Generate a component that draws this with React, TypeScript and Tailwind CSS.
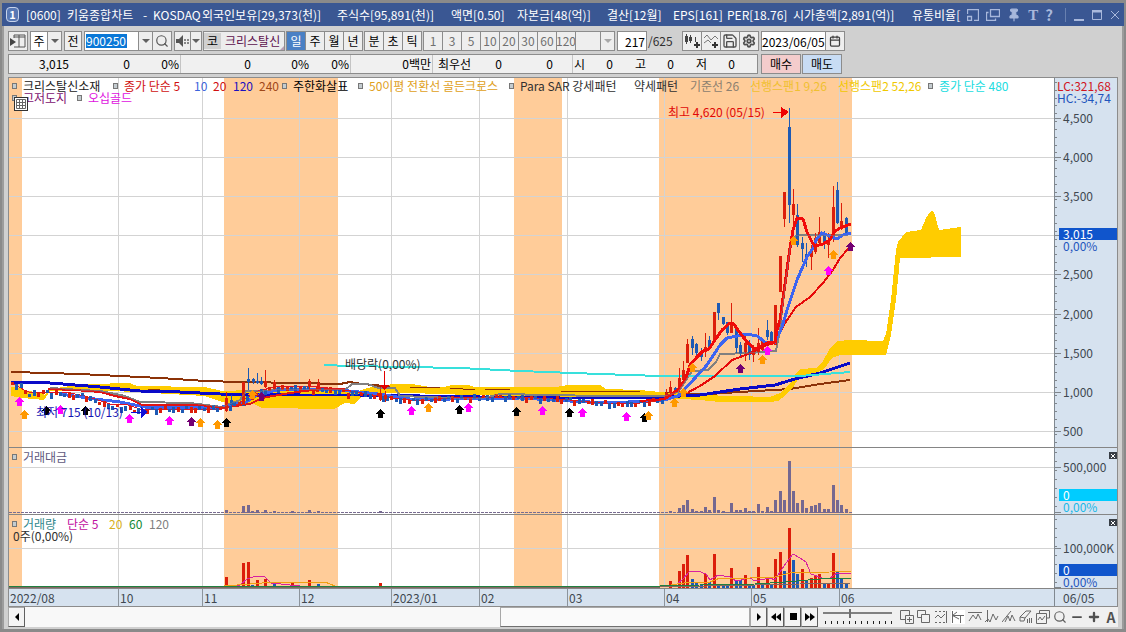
import type { ReactNode } from "react";
import { Search, Save, Settings, Calendar, Pin, Minus, Plus } from "lucide-react";

const LEFT = 9;
const WIDTH = 1045;

const BANDS = [[9, 22], [224, 338], [514, 562], [659, 852]];
const MONTHS: [number, string][] = [[9, "2022/08"], [118, "10"], [202, "11"], [299, "12"], [391, "2023/01"], [479, "02"], [567, "03"], [664, "04"], [751, "05"], [839, "06"]];

const RED = "#dc1e0a";
const BLUE = "#1e5ab4";

// x, high, low, body top, body bottom, rising
const CANDLES: [number, number, number, number, number, number][] = [
  [226, 392, 412, 398, 411, 1], [231, 395, 406, 400, 405, 0], [243, 382, 405, 382, 405, 1], [248, 368, 390, 379, 382, 0], [253, 378, 384, 379, 382, 0],
  [257, 373, 384, 381, 383, 0], [261, 377, 385, 381, 384, 0], [265, 370, 388, 381, 387, 1], [274, 380, 390, 382, 389, 1], [309, 379, 389, 381, 387, 1],
  [318, 379, 389, 383, 388, 1], [380, 387, 401, 393, 400, 1], [385, 391, 402, 395, 399, 1],
  [666, 389, 398, 393, 397, 1], [670, 381, 396, 387, 393, 1], [675, 387, 392, 388, 390, 0], [679, 368, 394, 378, 389, 1], [683, 361, 380, 370, 380, 1],
  [687, 339, 363, 344, 363, 1], [692, 336, 355, 339, 348, 0], [696, 343, 360, 344, 353, 0], [701, 348, 361, 351, 357, 0],
  [705, 333, 357, 347, 352, 1], [709, 336, 349, 340, 347, 0], [714, 312, 341, 312, 341, 1], [718, 303, 320, 303, 313, 0],
  [723, 317, 325, 317, 324, 0], [727, 322, 335, 322, 333, 0], [731, 303, 333, 322, 333, 1], [736, 327, 353, 328, 348, 0],
  [740, 342, 356, 345, 354, 0], [745, 333, 361, 343, 352, 1], [749, 340, 360, 343, 355, 0], [753, 345, 362, 348, 355, 1],
  [758, 328, 355, 343, 352, 1], [762, 338, 351, 340, 350, 1], [767, 320, 340, 330, 337, 0], [771, 331, 345, 332, 344, 0],
  [775, 305, 345, 305, 345, 1], [780, 256, 292, 256, 292, 1], [784, 192, 227, 192, 219, 1], [789, 108, 223, 127, 205, 0],
  [793, 189, 237, 204, 215, 1], [797, 204, 247, 215, 245, 0], [802, 237, 262, 243, 249, 0], [806, 243, 267, 254, 259, 0],
  [811, 245, 270, 250, 257, 1], [815, 233, 254, 238, 252, 1], [819, 217, 245, 232, 243, 1], [824, 231, 249, 233, 243, 0],
  [828, 233, 258, 240, 245, 1], [833, 186, 242, 207, 237, 1], [837, 182, 224, 190, 223, 0], [841, 203, 230, 221, 226, 1], [846, 217, 235, 218, 234, 0],
];

const EARLY_PATH = [[11, 383], [20, 385], [28, 395], [34, 392], [48, 392], [85, 396], [98, 402], [110, 406], [125, 407], [140, 411], [150, 409], [205, 408], [224, 407], [238, 403], [246, 398], [260, 391], [275, 387], [300, 387], [330, 390], [345, 392], [360, 393], [380, 396], [395, 399], [410, 400], [440, 398], [500, 396], [560, 399], [600, 402], [615, 404], [640, 402], [664, 399]];

function pathY(x: number) {
  for (let i = 1; i < EARLY_PATH.length; i++) {
    const [x0, y0] = EARLY_PATH[i - 1];
    const [x1, y1] = EARLY_PATH[i];
    if (x <= x1) return y0 + ((y1 - y0) * (x - x0)) / (x1 - x0);
  }
  return 399;
}

const EARLY = Array.from({ length: 150 }, (_, i) => {
  const x = Math.round(11 + i * 4.36);
  const wiggle = Math.sin(i * 2.3) * 1.5;
  return { x, y: Math.round(pathY(x) + wiggle), h: 3 + ((i * 7) % 4), up: (i * 5) % 7 < 3 };
}).filter((c) => c.x < 664);

type Mark = [number, number, string];
const M = "#ff00ff", O = "#ff9900", K = "#000000", P = "#730073";
const MARKS: Mark[] = [
  [19, 402, M], [24, 415, O], [46, 411, K], [60, 410, M], [85, 411, K], [129, 419, M], [169, 421, M], [191, 422, P], [200, 423, O], [217, 425, O],
  [226, 423, K], [252, 395, O], [261, 397, P], [380, 414, K], [411, 411, M], [428, 408, O], [459, 410, K], [468, 408, M], [516, 412, K], [542, 411, M],
  [569, 413, K], [582, 413, M], [626, 417, M], [644, 418, K], [648, 416, O], [674, 403, O], [683, 393, O], [692, 368, O], [740, 369, P], [762, 360, O],
  [767, 351, M], [793, 241, O], [828, 271, M], [833, 255, O], [850, 247, P],
];

// x, turnover bar top, volume bar top, rising
const BARS: [number, number, number, number][] = [
  [226, 510, 577, 1], [243, 506, 563, 1], [248, 505, 562, 1], [252, 511, 585, 0], [257, 510, 580, 1], [265, 510, 579, 1], [274, 511, 584, 0], [292, 511, 583, 1], [309, 510, 580, 1], [318, 511, 584, 0], [380, 511, 583, 1],
  [670, 511, 581, 1], [679, 508, 571, 1], [683, 505, 564, 1], [687, 500, 555, 1], [692, 509, 579, 0], [696, 511, 583, 0], [701, 511, 584, 0], [705, 507, 574, 1], [709, 510, 582, 0],
  [714, 497, 554, 1], [718, 510, 584, 0], [723, 511, 585, 0], [727, 512, 585, 0], [731, 503, 568, 1], [736, 510, 581, 0], [740, 510, 580, 0], [745, 508, 575, 1], [749, 511, 584, 0], [753, 511, 585, 0],
  [758, 504, 567, 1], [762, 511, 583, 0], [767, 507, 577, 1], [771, 511, 585, 0], [775, 500, 559, 1], [780, 491, 552, 1], [784, 500, 571, 0], [789, 461, 528, 1], [793, 491, 560, 0], [797, 503, 574, 0],
  [802, 500, 569, 1], [806, 508, 580, 0], [811, 506, 578, 1], [815, 505, 575, 1], [819, 503, 574, 1], [824, 509, 583, 0], [828, 509, 584, 1], [833, 485, 553, 1], [837, 500, 572, 0], [841, 505, 579, 0], [846, 509, 583, 0],
];

const CLOUD = "11,387 22,388 24,391 40,392 45,395 48,390 62,387 90,384 130,383 137,386 205,387 222,391 250,390 340,389 358,391 375,386 395,384 412,384 430,387 444,387 452,385 468,385 475,387 556,387 568,385 600,385 606,389 640,390 670,393 700,395 770,397 780,393 790,384 796,373 800,369 816,368 822,363 830,348 838,341 850,340 883,341 886,334 891,300 896,250 898,242 906,232 921,230 926,218 931,211 934,212 939,230 961,227 961,257 900,258 896,300 891,335 886,355 840,355 832,358 824,369 815,374 800,376 794,386 786,395 778,401 770,402 720,402 700,400 665,398 605,397 560,397 470,395 410,393 375,393 364,395 354,404 345,403 334,409 262,408 252,403 240,405 222,402 205,396 135,392 90,390 50,391 44,400 22,398 11,396";

const L = {
  brown: "11,372 48,373 80,374 120,376 160,378 205,381 240,382 300,383 340,384 350,382 362,384 385,386 440,389 470,388 510,388 560,391 640,392 665,393 710,394 740,392 790,389 820,384 850,380",
  navy: "11,382 50,383 100,387 140,391 180,392 220,394 300,395 360,395 420,396 480,397 560,398 620,398 660,397 700,395 740,389 775,385 795,379 820,373 850,363",
  cyan: "324,365 350,366 460,368 520,371 600,374 660,376 740,376 800,376 825,374 850,372",
  grey: "50,388 80,390 100,391 125,396 140,402 190,403 222,407 240,400 246,391 262,391 285,389 345,390 352,384 368,384 378,388 395,388 400,396 480,399 500,394 600,396 665,396 678,392 692,371 708,370 716,362 720,354 750,353 776,351 779,335 790,248 793,238 798,235 848,235",
  red5: "664,399 678,390 686,378 690,365 697,357 703,351 709,349 715,340 722,330 730,323 733,323 740,333 748,343 755,349 767,343 775,342 777,330 780,320 790,248 793,230 797,218 803,219 807,232 812,242 815,246 823,244 830,240 834,232 840,228 851,224",
  blue10: "664,400 678,396 684,390 695,378 707,365 720,345 727,338 737,336 747,334 757,336 765,342 775,342 782,327 788,307 797,280 807,257 813,248 816,240 822,233 827,235 837,239 843,235 851,233",
  red20: "640,401 665,399 687,393 700,386 715,376 732,360 743,356 755,351 767,345 775,343 785,323 796,307 810,297 823,283 833,270 840,258 849,248",
  early5: "11,382 24,390 32,393 52,392 70,393 85,396 98,400 110,404 125,404 140,409 222,409 238,404 246,398 258,391 275,387 310,386 345,390 378,396 400,399 420,401 450,398 520,397 570,400 610,404 640,403 664,400",
  early20: "48,389 75,390 100,392 115,396 130,399 142,405 200,405 222,408 250,404 262,398 290,393 320,389 345,389",
  early10: "60,394 95,399 120,402 150,408 222,407 246,402 256,396 280,389 330,389 378,394 410,399 450,399 520,398 570,401 610,403 664,400",
};

const GRIDLINE = "#d3d3d3";

function Backdrop({ top, height, lines }: { top: number; height: number; lines: number[] }) {
  return (
    <g>
      {BANDS.map(([a, b]) => <rect key={a} x={a} y={top} width={b - a} height={height} fill="#ffcc99" />)}
      {MONTHS.slice(1).map(([x]) => <rect key={x} x={x} y={top} width="1" height={height} fill={GRIDLINE} />)}
      {lines.map((y) => <rect key={y} x={LEFT} y={y} width={WIDTH} height="1" fill={GRIDLINE} />)}
    </g>
  );
}

function Line({ points, color, width = 2 }: { points: string; color: string; width?: number }) {
  return <polyline points={points} fill="none" stroke={color} strokeWidth={width} />;
}

type Label = { y: number; text: string; kind?: "navy" | "cyan" | "blueText" | "cyanText" | "redText" | "blueEdge" };

const LABEL_STYLE = {
  navy: "left-1 right-0 bg-[#1055cc] pl-1 text-white",
  cyan: "left-1 right-0 bg-[#00ccff] pl-1 text-white",
  blueText: "left-2 text-[#1f55bd]",
  blueEdge: "left-0.5 text-[#1f55bd]",
  cyanText: "left-2 text-[#18b8e8]",
  redText: "left-0.5 text-[#d0141e]",
  plain: "left-2 text-[#404850]",
};

function Pane({ top, height, className, ticks, labels, closable, children, overlay }: {
  top: number; height: number; className: string; ticks: number[]; labels: Label[]; closable?: boolean; children: ReactNode; overlay: ReactNode;
}) {
  const minor: number[] = [];
  const step = top === 78 ? 7.83 : 9;
  for (let y = top + 4; y < top + height; y += step) minor.push(Math.round(y));
  return (
    <section className={`flex border-b border-[#858585] ${className}`}>
      <div className="relative min-w-0 flex-1 overflow-hidden bg-white">
        <svg className="absolute inset-0 h-full w-full" viewBox={`${LEFT} ${top} ${WIDTH} ${height}`} preserveAspectRatio="none" shapeRendering="crispEdges">
          {children}
        </svg>
        {overlay}
      </div>
      <div className="relative w-[63px] shrink-0 border-l border-[#808890] bg-[#d6e2ef]">
        <svg className="absolute inset-y-0 left-0 h-full w-2" viewBox={`0 ${top} 8 ${height}`} preserveAspectRatio="none" shapeRendering="crispEdges">
          {minor.map((y) => <rect key={y} x="0" y={y} width="2" height="1" fill="#80868c" />)}
          {ticks.map((y) => <rect key={y} x="0" y={y} width="6" height="1" fill="#80868c" />)}
        </svg>
        {labels.map((l) => (
          <span key={l.text + l.y} className={`absolute -translate-y-1/2 text-[12px] leading-[12px] whitespace-nowrap ${LABEL_STYLE[l.kind ?? "plain"]}`} style={{ top: `${((l.y - top) / height) * 100}%` }}>
            {l.text}
          </span>
        ))}
        {closable && (
          <button aria-label="닫기" className="absolute top-1 right-0 flex h-[7px] w-2 items-center justify-center bg-[#383e46]">
            <svg className="h-1 w-1" viewBox="0 0 4 4"><path d="M0 0L4 4M4 0L0 4" stroke="#fff" /></svg>
          </button>
        )}
      </div>
    </section>
  );
}

function Bullet() {
  return <i className="mr-1.5 inline-block h-1.5 w-[5px] shrink-0 border border-[#777] bg-[#c4ccd0]" />;
}

const LEGEND: [string, string, boolean?][] = [
  ["w-[101px] text-[#202020]", "크리스탈신소재", true],
  ["w-[81px] text-[#d01010]", "종가 단순 5", true],
  ["w-[19px] text-[#3c64dc]", "10"],
  ["w-5 text-[#d01010]", "20"],
  ["w-[26px] text-[#1a10c0]", "120"],
  ["w-[23px] text-[#a04818]", "240"],
  ["w-[76px] text-black", "주한화살표", true],
  ["w-[151px] text-[#e0a020]", "50이평 전환선 골든크로스", true],
  ["w-[125px] text-[#303030]", "Para SAR 강세패턴", true],
  ["w-14 text-[#303030]", "약세패턴"],
  ["w-[60px] text-[#8c8070]", "기준선 26"],
  ["w-[88px] text-[#f0c030]", "선행스팬1 9,26"],
  ["w-[90px] text-[#f0c800]", "선행스팬2 52,26"],
  ["w-[100px] text-[#20dce0]", "종가 단순 480", true],
];

function Note({ x, y, className, children }: { x: number; y: number; className: string; children: ReactNode }) {
  return (
    <span className={`absolute -translate-y-1/2 whitespace-nowrap text-[12px] leading-[12px] ${className}`} style={{ left: `${((x - LEFT) / WIDTH) * 100}%`, top: `${((y - 78) / 369) * 100}%` }}>
      {children}
    </span>
  );
}

const FRAME = "flex h-5 shrink-0 items-center justify-center border border-[#8c8c8c] -ml-px";
const BTN = `${FRAME} bg-[#eeeeee]`;

function Caret({ dim }: { dim?: boolean }) {
  return <svg className="h-1 w-2" viewBox="0 0 8 4"><path d="M0 0H8L4 4Z" fill={dim ? "#a8a8a8" : "#606060"} /></svg>;
}

function Toolbar() {
  return (
    <div className="flex h-5 items-center overflow-hidden pl-px text-[12px] text-black">
      <button aria-label="창 연결" className={`${BTN} w-5`}>
        <svg className="h-3.5 w-4" viewBox="0 0 16 14" fill="none"><path d="M4 1H15V13H4M4 1V4M9 1V13M4 3H15" stroke="#555" /><path d="M0 4L6 8L0 12Z" fill="#444" /></svg>
      </button>
      <button className={`${FRAME} ml-0.5 w-[18px] bg-white`}>주</button>
      <button aria-label="주 선택" className={`${BTN} w-[15px]`}><Caret /></button>
      <button className={`${BTN} ml-0.5 w-[18px]`}>전</button>
      <label className="ml-0.5 flex h-5 w-[55px] shrink-0 items-center border border-[#8c8c8c] bg-white pl-px">
        <input aria-label="종목코드" readOnly defaultValue="900250" className="h-3.5 w-[41px] bg-[#0a78d7] text-white outline-none" />
      </label>
      <button aria-label="종목 목록" className={`${BTN} w-[15px]`}><Caret /></button>
      <button aria-label="종목 검색" className={`${BTN} w-5`}><Search className="h-3.5 w-3.5 text-[#555]" /></button>
      <button aria-label="소리" className={`${BTN} ml-0.5 w-[17px]`}>
        <svg className="h-3 w-3.5" viewBox="0 0 14 12"><path d="M0 4H3L7 0V12L3 8H0Z" fill="#555" /><path d="M9 4V6M9 7V9M12 4V6M12 7V9" stroke="#666" strokeWidth="1.5" /></svg>
      </button>
      <button aria-label="소리 선택" className={`${BTN} w-3`}><Caret /></button>
      <div className="ml-px flex h-5 w-[82px] shrink-0 items-center overflow-hidden border border-[#8c8c8c] bg-[#ededed]">
        <span className="flex h-4 w-[17px] shrink-0 items-center justify-center bg-[#d0d0d0]">코</span>
        <span className="ml-1 whitespace-nowrap text-[#5c104c]">크리스탈신</span>
        <svg className="mt-auto ml-auto h-1.5 w-1.5 shrink-0" viewBox="0 0 6 6"><path d="M6 0V6H0Z" fill="#b8a0b4" /></svg>
      </div>
      <div className="ml-0.5 flex">
        {["일", "주", "월", "년"].map((t) => (
          <button key={t} className={t === "일" ? `${FRAME} w-5 bg-[#4a80c4] text-white` : `${BTN} w-5`}>{t}</button>
        ))}
      </div>
      <div className="ml-0.5 flex">
        {["분", "초", "틱"].map((t) => <button key={t} className={`${BTN} w-5`}>{t}</button>)}
      </div>
      <div className="ml-0.5 flex text-[#707070]">
        {["1", "3", "5", "10", "20", "30", "60", "120"].map((t) => <button key={t} className={`${BTN} w-5`}>{t}</button>)}
      </div>
      <button aria-label="분 주기" className={`${BTN} w-[26px]`} />
      <button aria-label="주기 선택" className={`${BTN} w-[15px]`}><Caret dim /></button>
      <input aria-label="봉 개수" readOnly defaultValue="217" className="ml-0.5 h-5 w-[30px] shrink-0 border border-[#8c8c8c] bg-white pr-px text-right outline-none" />
      <span className="w-[35px] shrink-0 pl-px text-[#303030]">/625</span>
      <button aria-label="봉 추가" className={`${BTN} ml-0 w-5`}>
        <svg className="h-3.5 w-4" viewBox="0 0 16 14"><path d="M2.500 0V10M6.500 1V9M11.500 3V8" stroke="#444" /><path d="M1 2H4V8H1ZM5 3H8V7H5Z" fill="#444" /><path d="M13 8V14M10 11H16" stroke="#333" strokeWidth="2" /></svg>
      </button>
      <button aria-label="지표 추가" className={`${BTN} w-5`}>
        <svg className="h-3.5 w-4" viewBox="0 0 16 14" fill="none"><path d="M1 4L4 1L8 6L12 2L15 5M1 9L5 6L8 9" stroke="#777" /><path d="M12 8V14M9 11H15" stroke="#333" strokeWidth="2" /></svg>
      </button>
      <button aria-label="저장" className={`${BTN} w-5`}><Save className="h-4 w-4 text-[#505050]" strokeWidth={2} /></button>
      <button aria-label="설정" className={`${BTN} w-5`}><Settings className="h-3.5 w-3.5 text-[#505050]" strokeWidth={3} /></button>
      <input aria-label="날짜" readOnly defaultValue="2023/06/05" className="ml-0.5 h-5 w-[65px] shrink-0 border border-[#8c8c8c] bg-white outline-none" />
      <button aria-label="달력" className={`${BTN} w-5`}><Calendar className="h-3 w-3 text-[#404040]" strokeWidth={2.5} /></button>
    </div>
  );
}

const QUOTES: [string, string][] = [
  ["w-[61px]", "3,015"], ["w-[61px]", "0"], ["w-[50px] border-r border-[#c4c4c4]", "0%"],
  ["w-[71px]", "0"], ["w-[58px]", "0%"], ["w-[41px] border-r border-[#c4c4c4]", "0%"],
  ["w-[82px] border-r border-[#c4c4c4]", "0백만"], ["w-[39px]", "최우선"], ["w-[31px]", "0"], ["w-[51px]", "0"],
  ["ml-[18px] w-3.5 border-l border-[#c4c4c4]", "시"], ["w-7", "0"], ["w-[33px]", "고"], ["w-7", "0"], ["w-[33px]", "저"], ["w-7", "0"],
];

function QuoteRow() {
  return (
    <div className="flex h-5 items-stretch gap-[3px] text-[12px] text-black">
      <div className="flex w-[750px] shrink-0 items-center overflow-hidden border border-[#8c8c8c] bg-[#f0f0f0]">
        {QUOTES.map(([w, t], i) => <span key={i} className={`shrink-0 pr-px text-right whitespace-nowrap ${w}`}>{t}</span>)}
      </div>
      <button className="w-10 border border-[#8c8c8c] bg-[#f4cccc]">매수</button>
      <button className="-ml-0.5 w-10 border border-[#8c8c8c] bg-[#c8dcf4]">매도</button>
    </div>
  );
}

const TITLE: [string, string][] = [
  ["w-[41px]", "[0600]"], ["w-[76px]", "키움종합차트"], ["w-2.5", "-"], ["w-[49px]", "KOSDAQ"], ["w-[135px]", "외국인보유[29,373(천)]"],
  ["w-[114px]", "주식수[95,891(천)]"], ["w-[66px]", "액면[0.50]"], ["w-[90px]", "자본금[48(억)]"], ["w-[66px]", "결산[12월]"], ["w-[54px]", "EPS[161]"],
  ["w-[66px]", "PER[18.76]"], ["w-[119px]", "시가총액[2,891(억)]"], ["w-[50px]", "유통비율["],
];

function TitleBar() {
  return (
    <header className="flex h-[23px] items-center bg-[#3a5793] pr-1 pl-1 text-[12px] text-white">
      <span className="mr-[7px] flex h-[15px] w-[13px] shrink-0 items-center justify-center rounded-sm border border-[#c8d4ec] bg-[#5878b4] text-[11px] font-bold">1</span>
      <h1 className="flex min-w-0 overflow-hidden font-normal">
        {TITLE.map(([w, t]) => <span key={t} className={`shrink-0 whitespace-nowrap ${w}`}>{t}</span>)}
      </h1>
      <div className="ml-auto flex shrink-0 items-center gap-2 text-[#a8b8dc]">
        <div className="flex items-center gap-[7px]">
          <button aria-label="크기 조절"><svg className="block h-3 w-3" viewBox="0 0 12 12" fill="none" stroke="currentColor"><path d="M.5 5V.5H11.500V11.500H7M.5 7.500H4.500V11.500H.5Z" strokeWidth="1.300" /></svg></button>
          <button aria-label="창 복제"><svg className="block h-3 w-3.5" viewBox="0 0 14 12" fill="none" stroke="currentColor"><path d="M4.500 .5H13.500V7.500H4.500ZM2.500 3.500H.5V11.500H9.500V9.500" strokeWidth="1.300" /></svg></button>
          <button aria-label="고정"><Pin className="block h-3.5 w-3.5" fill="currentColor" /></button>
          <button aria-label="글꼴" className="font-['Liberation_Serif',serif] text-[15px] leading-4 font-bold">T</button>
          <button aria-label="도움말" className="text-[15px] leading-4 font-bold">?</button>
        </div>
        <i className="ml-1 h-3.5 w-px bg-[#6880b0]" />
        <button aria-label="최소화"><svg className="block h-3 w-2.5" viewBox="0 0 10 12"><path d="M0 10H10V12H0Z" fill="currentColor" /></svg></button>
        <button aria-label="최대화"><svg className="block h-2.5 w-2.5" viewBox="0 0 10 10" fill="none" stroke="currentColor"><path d="M.5 2H9.500V9.500H.5Z" /><path d="M0 1H10" strokeWidth="2" /></svg></button>
        <button aria-label="닫기"><svg className="block h-2.5 w-2.5" viewBox="0 0 10 10" stroke="currentColor"><path d="M1 1L9 9M9 1L1 9" /></svg></button>
      </div>
    </header>
  );
}

const TOOL_PATHS: [string, string][] = [
  ["새 창", "M5 9.500H.5V.5H9.500V5M5.500 5.500H13.500V13.500H5.500ZM9.500 7V12M7 9.500H12"],
  ["겹치기", "M4 7.500H.5V.5H8.500V4M4.500 4.500H12.500V12.500H4.500Z"],
  ["기간", "M1 1.500H3M5 1.500H7M9 1.500H11M1 12.500H3M5 12.500H7M9 12.500H11M12.500 1V13M1 8L4 5L7 8L11 4"],
  ["십자선", "M1.500 1V13M1.500 5.500H13M6 2L1.500 5.500L8 9M9.500 5V13"],
  ["추세", "M0 2.500H14M1 11L5 5L8 9L10 4L13 10"],
  ["파동", "M2.500 0V12M0 12L3 9L5 12L8 4L11 10L13 6"],
  ["분석", "M0 12L9 1M3 12L6 6L8 11L10 5L13 11"],
  ["지우개", "M1 7L7 1H12L6 8ZM1 7V11H5L6 8M8.500 9V13M10.500 8V13M12.500 8V13"],
  ["차트 복사", "M3.500 3V.5H13.500V8H11M.5 3.500H10.500V13.500H.5ZM2 10L4 7L6 10L9 6"],
];

const CONTROL = "flex h-full w-[17px] shrink-0 items-center justify-center border border-[#a8a8a8] border-r-[#606060] border-b-[#606060] bg-[#f4f4f4]";

function BottomBar() {
  return (
    <footer className="flex h-5 items-stretch bg-[#f0f0f0]">
      <button aria-label="왼쪽으로" className={CONTROL}><svg className="h-2 w-1.5" viewBox="0 0 6 8"><path d="M5 0V8L1 4Z" /></svg></button>
      <div className="flex min-w-0 flex-1 bg-[#f8f8f8]">
        <div className="ml-auto w-[34.500%] border border-[#a8a8a8] border-b-[#707070] bg-[#fafafa]" />
      </div>
      <div className="flex shrink-0">
        <button aria-label="재생" className={CONTROL}><svg className="h-2 w-1.5" viewBox="0 0 6 8"><path d="M1 0V8L5 4Z" /></svg></button>
        <button aria-label="뒤로" className={CONTROL}><svg className="h-2 w-2.5" viewBox="0 0 10 8"><path d="M5 0V8L0 4ZM10 0V8L5 4Z" /></svg></button>
        <button aria-label="정지" className={CONTROL}><svg className="h-2 w-2" viewBox="0 0 8 8"><path d="M1 0H8V7H1Z" /></svg></button>
        <button aria-label="앞으로" className={CONTROL}><svg className="h-2 w-2.5" viewBox="0 0 10 8"><path d="M0 0V8L5 4ZM5 0V8L10 4Z" /></svg></button>
      </div>
      <div className="relative ml-[5px] w-[70px] shrink-0">
        <svg className="h-5 w-[70px]" viewBox="0 0 70 20" shapeRendering="crispEdges">
          <rect y="5" width="69" height="2" fill="#808080" />
          <rect x="26" y="2" width="2" height="9" fill="#707070" />
          {Array.from({ length: 12 }, (_, i) => <rect key={i} x={2 + i * 6} y="14" width="1" height="3" fill="#222" />)}
        </svg>
        <input aria-label="재생 속도" type="range" defaultValue="38" className="absolute inset-0 h-5 w-full opacity-0" />
      </div>
      <div className="ml-[7px] flex shrink-0 items-center gap-[3px]">
        {TOOL_PATHS.map(([name, d]) => (
          <button key={name} aria-label={name} className={name === "십자선" ? "bg-white" : ""}>
            <svg className="block h-3.5 w-3.5" viewBox="0 0 14 14" fill="none" stroke="#686868"><path d={d} /></svg>
          </button>
        ))}
        <button aria-label="돋보기"><Search className="block h-3.5 w-3.5 text-[#606060]" /></button>
        <button aria-label="축소"><Minus className="block h-3.5 w-3.5 text-[#505050]" strokeWidth={3} /></button>
        <button aria-label="확대"><Plus className="block h-3.5 w-3.5 text-[#505050]" strokeWidth={4} /></button>
        <button aria-label="자동" className="w-3.5 text-[14px] leading-4 font-bold text-[#505050]">A</button>
      </div>
    </footer>
  );
}

export default function App() {
  return (
    <main className="flex min-h-screen flex-col border-x-2 border-t-[3px] border-b-[3px] border-[#8a8a8a] bg-[#d0d0d0] font-['Noto_Sans_CJK_KR',sans-serif]">
      <TitleBar />
      <div className="flex flex-1 flex-col border-x-2 border-[#9c9c9c] px-1 pt-[5px] pb-0.5">
        <Toolbar />
        <div className="mt-[3px]"><QuoteRow /></div>
        <div className="mt-[3px] flex min-h-0 flex-1 flex-col border border-[#8c8c8c]">
          <Pane
            top={78} height={369} className="min-h-[300px] flex-1"
            ticks={[118, 157, 196, 235, 274, 314, 353, 392, 431]}
            labels={[
              { y: 86, text: "LC:321,68", kind: "redText" }, { y: 98, text: "HC:-34,74", kind: "blueEdge" },
              { y: 118, text: "4,500" }, { y: 157, text: "4,000" }, { y: 196, text: "3,500" }, { y: 234, text: "3,015", kind: "navy" }, { y: 246, text: "0,00%", kind: "blueText" },
              { y: 274, text: "2,500" }, { y: 314, text: "2,000" }, { y: 353, text: "1,500" }, { y: 392, text: "1,000" }, { y: 431, text: "500" },
            ]}
            overlay={
              <>
                <div className="absolute top-0 left-0 flex h-4 items-center pl-[3px] text-[12px] leading-3 whitespace-nowrap">
                  {LEGEND.map(([cls, text, mark], i) => (
                    <span key={i} className={`flex shrink-0 items-center ${cls}`}>{mark && <Bullet />}{text}</span>
                  ))}
                </div>
                <div className="absolute top-3.5 left-[3px] flex items-center text-[12px] leading-3 whitespace-nowrap">
                  <Bullet /><span className="w-[54px] text-[#801070]">고저도지</span><Bullet /><span className="text-[#e010e0]">오십골드</span>
                </div>
                <button aria-label="표 보기" className="absolute top-[19px] left-[5px] flex h-3.5 w-3.5 items-center justify-center border border-[#333] bg-white">
                  <svg className="h-2.5 w-2.5" viewBox="0 0 10 10" fill="none" stroke="#666"><path d="M.5 .5H9.500V9.500H.5ZM0 3.500H10M0 6.500H10M3.500 0V10M6.500 0V10" /></svg>
                </button>
                <Note x={668} y={112} className="text-[#e00808]">최고 4,620 (05/15)</Note>
                <Note x={345} y={364} className="text-[#303030]">배당락(0,00%)</Note>
                <Note x={36} y={412} className="text-[#1414b4]">최저 715 (10/13)</Note>
              </>
            }
          >
            <Backdrop top={78} height={369} lines={[118, 157, 196, 235, 274, 314, 353, 392, 431]} />
            <Line points={L.brown} color="#8c3208" />
            <polygon points={CLOUD} fill="#ffcc00" />
            <path d="M148 389L160 390M188 391L200 392M450 388L475 390M485 389L510 389M560 391L640 392M375 386L390 387M410 387L440 388" stroke="#8c3208" fill="none" />
            <Line points={L.navy} color="#0a0ac8" width={3} />
            <Line points={L.grey} color="#808080" />
            <Line points={L.cyan} color="#38e0dc" />
            <Line points={L.early10} color="#3c64f0" width={3} />
            <Line points={L.early20} color="#e01414" />
            <Line points={L.early5} color="#e01428" width={1} />
            {EARLY.map((c) => <rect key={c.x} x={c.x} y={c.y - 1} width="3" height={c.h} fill={c.up ? RED : BLUE} />)}
            {CANDLES.map(([x, hi, lo, t, b, up]) => (
              <g key={x} fill={up ? RED : BLUE}>
                <rect x={x} y={hi} width="1" height={lo - hi} />
                <rect x={x - 1} y={t} width="3" height={b - t} />
              </g>
            ))}
            <Line points={L.red20} color="#e60a0a" />
            <Line points={L.blue10} color="#3c64f0" width={3} />
            <Line points={L.red5} color="#f00a0a" width={3} />
            <Line points={L.grey} color="#80808080" width={1} />
            {MARKS.map(([x, y, c]) => <path key={`${x}-${y}`} d={`M${x + 0.5} ${y - 5}L${x + 5} ${y}H${x + 3}V${y + 4}H${x - 2}V${y}H${x - 4}Z`} fill={c} />)}
            <path d="M773 112H781V107L789 112L781 118V113H773Z" fill="#f00000" />
            <path d="M131 412H141V407L148 412L141 418V413H131Z" fill="#1010d8" />
            <path d="M384 371H385V385H389L384 390L380 385H384Z" fill="#e00000" />
          </Pane>
          <Pane
            top={448} height={66} className="h-[67px] shrink-0" closable ticks={[467, 512]}
            labels={[{ y: 467, text: "500,000" }, { y: 495, text: "0", kind: "cyan" }, { y: 507, text: "0,00%", kind: "cyanText" }]}
            overlay={<div className="absolute top-[3px] left-[3px] flex items-center text-[12px] leading-3 text-[#605880]"><Bullet />거래대금</div>}
          >
            <Backdrop top={448} height={66} lines={[467]} />
            <path d="M9 512.500H852" stroke="#786c90" strokeDasharray="3 1" />
            {BARS.map(([x, t]) => <rect key={x} x={x - 1} y={t} width="3" height={513 - t} fill="#756890" />)}
          </Pane>
          <Pane
            top={515} height={73} className="h-[74px] shrink-0" closable ticks={[548, 587]}
            labels={[{ y: 548, text: "100,000K" }, { y: 570, text: "0", kind: "navy" }, { y: 582, text: "0,00%", kind: "blueText" }]}
            overlay={
              <>
                <div className="absolute top-[3px] left-[3px] flex items-center text-[12px] leading-3 whitespace-nowrap">
                  <Bullet />
                  <span className="w-11 text-[#30888c]">거래량</span><span className="w-[42px] text-[#c010a0]">단순 5</span><span className="w-5 text-[#d8b020]">20</span><span className="w-5 text-[#108830]">60</span><span className="text-[#808080]">120</span>
                </div>
                <span className="absolute top-[15px] left-1 text-[12px] leading-3 text-[#303030]">0주(0,00%)</span>
              </>
            }
          >
            <Backdrop top={515} height={73} lines={[548]} />
            {BARS.map(([x, , t, up]) => <rect key={x} x={x - 1} y={t} width="3" height={588 - t} fill={up ? RED : BLUE} />)}
            <Line width={1} color="#d820a0" points="224,585 240,585 247,579 256,576 264,576 271,583 300,586 665,586 677,584 683,579 690,571 698,571 706,574 710,580 718,575 730,577 736,581 750,578 755,581 770,578 775,580 780,572 786,563 793,554 800,558 806,562 811,574 822,578 830,578 837,573 851,574" />
            <Line width={1} color="#f0a010" points="224,586 250,584 275,582 325,582 335,586 665,586 690,582 710,582 720,578 750,578 775,577 790,573 830,572 851,571" />
            <Line width={1} color="#806860" points="9,587 660,587 755,585 800,584 851,583" />
            <Line width={1} color="#208040" points="9,586 202,586 330,586 660,586 700,585 755,584 785,582 820,579 851,578" />
          </Pane>
          <div className="flex h-[17px] shrink-0 bg-[#d6e2ef] text-[12px] leading-[17px] text-[#404850]">
            <div className="relative min-w-0 flex-1">
              {MONTHS.map(([x, t]) => (
                <span key={t} className={`absolute top-0 h-full pl-px ${x > 9 ? "border-l border-[#8c949c]" : ""}`} style={{ left: `${((x - LEFT) / WIDTH) * 100}%` }}>{t}</span>
              ))}
            </div>
            <div className="w-[63px] shrink-0 border-l border-[#808890] pl-2">06/05</div>
          </div>
        </div>
        <BottomBar />
      </div>
    </main>
  );
}
